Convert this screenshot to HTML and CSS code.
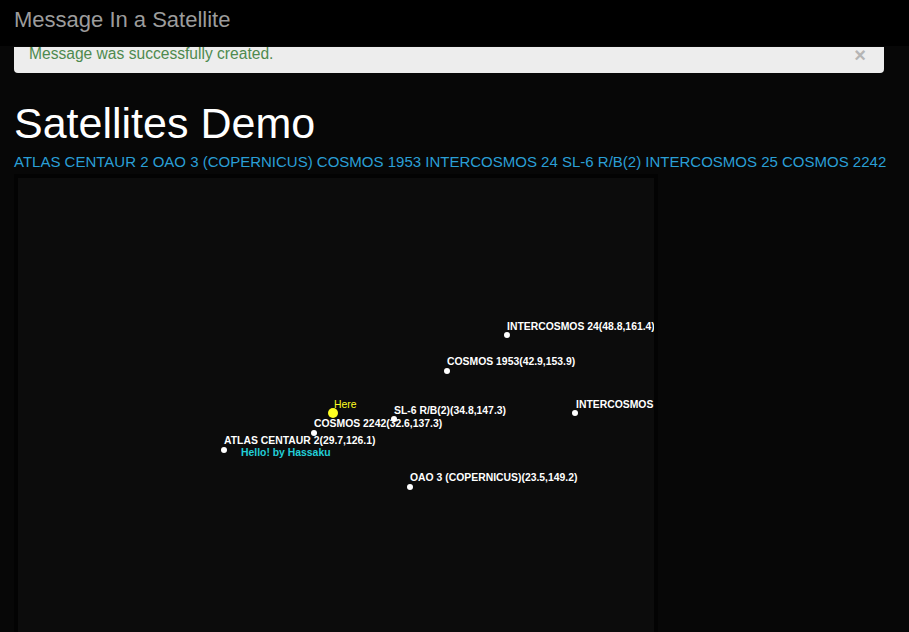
FILE: index.html
```html
<!DOCTYPE html>
<html>
<head>
<meta charset="utf-8">
<title>Message In a Satellite</title>
<link rel="stylesheet" href="styles.css">
</head>
<body>
<header class="navbar"><span class="brand">Message In a Satellite</span></header>
<main class="container">
  <div class="alert"><span class="alert-text">Message was successfully created.</span><span class="close">×</span></div>
  <h1 class="title">Satellites Demo</h1>
  <nav class="sat-links">
    <a href="#">ATLAS CENTAUR 2</a> <a href="#">OAO 3 (COPERNICUS)</a> <a href="#">COSMOS 1953</a> <a href="#">INTERCOSMOS 24</a> <a href="#">SL-6 R/B(2)</a> <a href="#">INTERCOSMOS 25</a> <a href="#">COSMOS 2242</a>
  </nav>
  <div class="map">
    <svg class="map-svg" width="636" height="460" viewBox="0 0 636 460">
      <g class="sat">
        <circle cx="489" cy="157" r="3"/><text x="489" y="152">INTERCOSMOS 24(48.8,161.4)</text>
        <circle cx="429" cy="193" r="3"/><text x="429" y="187">COSMOS 1953(42.9,153.9)</text>
        <circle cx="376" cy="241" r="3"/><text x="376" y="236">SL-6 R/B(2)(34.8,147.3)</text>
        <circle cx="557" cy="235" r="3"/><text x="558" y="230">INTERCOSMOS 25(52.1,170.4)</text>
        <circle cx="296" cy="255" r="3"/><text x="296" y="249">COSMOS 2242(32.6,137.3)</text>
        <circle cx="206" cy="272" r="3"/><text x="206" y="266">ATLAS CENTAUR 2(29.7,126.1)</text>
        <circle cx="392" cy="309" r="3"/><text x="392" y="303">OAO 3 (COPERNICUS)(23.5,149.2)</text>
      </g>
      <g class="here">
        <circle cx="315" cy="235" r="5"/><text x="316" y="230">Here</text>
      </g>
      <text class="msg" x="223" y="278">Hello! by Hassaku</text>
    </svg>
  </div>
</main>
</body>
</html>
```
FILE: styles.css
```css
html, body {
  margin: 0;
  padding: 0;
  background: #070707;
  font-family: "Liberation Sans", Arial, sans-serif;
  overflow: hidden;
}
.navbar {
  height: 46px;
  background: #000;
  padding: 8px 14px 0;
  box-sizing: border-box;
}
.brand {
  font-size: 22px;
  line-height: 24px;
  color: #9c9c9c;
}
.container {
  padding: 1px 25px 0 14px;
}
.alert {
  height: 26px;
  background: #ededed;
  border-radius: 0 0 4px 4px;
  display: flex;
  align-items: center;
  justify-content: space-between;
  padding: 0 16px 0 15px;
  box-sizing: border-box;
}
.alert-text {
  color: #4e8a4f;
  font-size: 15.6px;
  line-height: 16px;
  margin-top: -12px;
}
.close {
  color: #b5b5b5;
  font-size: 20px;
  font-weight: bold;
  line-height: 20px;
  margin-top: -11px;
  margin-right: 2px;
}
.title {
  margin: 26px 0 0;
  font-size: 43px;
  line-height: 48px;
  font-weight: normal;
  color: #fff;
}
.sat-links {
  margin-top: 5px;
  font-size: 15px;
  line-height: 19px;
  white-space: nowrap;
}
.sat-links a {
  color: #2a9fd6;
  text-decoration: none;
}
.map {
  margin-top: 3px;
  width: 636px;
  height: 460px;
  border: 4px solid #030303;
  background: #0c0c0c;
}
.map-svg {
  display: block;
}
.sat circle { fill: #fff; }
.sat text {
  fill: #fff;
  font-family: "Liberation Sans", Arial, sans-serif;
  font-size: 10.4px;
  font-weight: bold;
}
.here circle { fill: #ffff22; }
.here text {
  fill: #ffff22;
  font-family: "Liberation Sans", Arial, sans-serif;
  font-size: 10.4px;
}
.msg {
  fill: #22cfd8;
  font-family: "Liberation Sans", Arial, sans-serif;
  font-size: 10.4px;
  font-weight: bold;
}
```
